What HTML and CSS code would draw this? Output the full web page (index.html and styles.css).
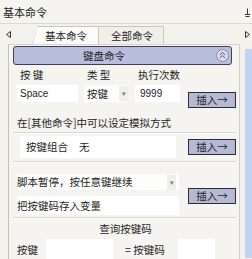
FILE: index.html
```html
<!doctype html>
<html lang="zh">
  <head>
    <meta charset="UTF-8" />
    <title>基本命令</title>
    <link rel="stylesheet" href="styles.css">
  </head>
  <body>
    <div class="titlebar">
      <span class="title">基本命令</span>
      <svg class="pin" width="7" height="9" viewBox="0 0 7 9">
        <path d="M3.5 0.5v6M1 6.5h5M1.5 8.5h4" stroke="#333" stroke-width="1" fill="none" />
      </svg>
    </div>
    <div class="tabbar">
      <svg class="arrow" width="5" height="7" viewBox="0 0 5 7">
        <path d="M4.5 0.5v6L0.5 3.5z" fill="none" stroke="#333" stroke-width="1" />
      </svg>
      <div class="tabs">
        <div class="tab active">基本命令</div>
        <div class="tab">全部命令</div>
      </div>
      <svg class="arrow" width="5" height="7" viewBox="0 0 5 7">
        <path d="M0.5 0.5v6L4.5 3.5z" fill="none" stroke="#333" stroke-width="1" />
      </svg>
    </div>
    <div class="main">
      <div class="panel">
        <div class="header">
          <span class="header-title">键盘命令</span>
          <svg class="collapse" width="13" height="13" viewBox="0 0 13 13">
            <circle cx="6.5" cy="6.5" r="6" fill="#d8dbec" stroke="#8a8ca4" />
            <path d="M3.8 6l2.7-2.5L9.2 6M3.8 9l2.7-2.5L9.2 9" fill="none" stroke="#55576e" stroke-width="1" />
          </svg>
        </div>

        <div class="sec sec-keys">
          <div class="fields">
            <div class="labels">
              <span class="col-key">按 键</span>
              <span class="col-type">类 型</span>
              <span>执行次数</span>
            </div>
            <div class="inputs">
              <div class="input latin key">Space</div>
              <div class="select type">按键<span class="drop">▾</span></div>
              <div class="input latin count">9999</div>
            </div>
          </div>
          <button class="insert ins-1">插入→</button>
        </div>
        <div class="hint">在[其他命令]中可以设定模拟方式</div>
        <div class="sep"></div>

        <div class="sec sec-combo">
          <div class="input combo"><span class="combo-label">按键组合</span>无</div>
          <button class="insert">插入→</button>
        </div>
        <div class="sep"></div>

        <div class="sec sec-pause">
          <div class="pause-fields">
            <div class="select pause">脚本暂停，按任意键继续<span class="drop">▾</span></div>
            <div class="input store">把按键码存入变量</div>
          </div>
          <button class="insert ins-3">插入→</button>
        </div>
        <div class="sep"></div>

        <div class="query-title">查询按键码</div>
        <div class="query">
          <span>按键</span>
          <div class="input q-key"></div>
          <span class="eq">= 按键码</span>
          <div class="input q-code"></div>
        </div>
      </div>
      <div class="side">
        <div class="side-blue"></div>
      </div>
    </div>
  </body>
</html>
```

FILE: styles.css
```css
html,
body {
  margin: 0;
}
body {
  width: 252px;
  height: 259px;
  overflow: hidden;
  background: #f2f1ec;
  color: #1e1e1e;
  font-family: "Noto Sans CJK SC", sans-serif;
  font-size: 10.5px;
  line-height: 14px;
}

.titlebar {
  height: 23px;
  display: flex;
  align-items: center;
  justify-content: space-between;
  padding: 0 1px 0 3px;
  border-bottom: 1px solid #dcdad0;
  background: #f5f4f0;
}
.title {
  font-size: 11px;
}
.pin {
  margin-top: 2px;
}

.tabbar {
  height: 20px;
  display: flex;
  align-items: center;
  padding: 0 2px 0 6px;
}
.tabs {
  flex: 1;
  display: flex;
  align-self: flex-end;
  margin-left: 21px;
  height: 18px;
}
.tab {
  width: 52px;
  height: 17px;
  padding-left: 12px;
  border: 1px solid #c9c7bd;
  border-bottom: none;
  line-height: 17px;
  background: #f0efea;
}
.tab.active {
  width: 53px;
  padding-left: 13px;
  background: #fbfbf9;
  border-left: none;
  clip-path: polygon(6px 0, 100% 0, 100% 100%, 0 100%);
  position: relative;
  z-index: 1;
}
.tab.active::before {
  content: '';
  position: absolute;
  left: 2px;
  top: -1px;
  width: 1px;
  height: 20px;
  background: #c9c7bd;
  transform: rotate(17deg);
}
.tab + .tab {
  margin-left: -1px;
}

.main {
  display: flex;
}
.panel {
  width: 223px;
  height: 213px;
  padding: 1px 3px 0 4px;
  border-top: 1px solid #d9d7cd;
  border-left: 1px solid #c4c2b7;
  border-right: 1px solid #d2d0c6;
  margin-left: 8px;
  background: #f5f4f1;
}
.side {
  width: 12px;
  padding-top: 5px;
  display: flex;
  justify-content: flex-end;
}
.side-blue {
  width: 7px;
  height: 209px;
  background: #c6d2f1;
}

.header {
  height: 17px;
  margin-right: 4px;
  border: 1px solid #3e3f52;
  border-radius: 3px;
  background: #b9bedc;
  display: flex;
  align-items: center;
  padding: 0 2px 0 0;
}
.header-title {
  flex: 1;
  text-align: center;
  padding-right: 22px;
}

.sec {
  display: flex;
  justify-content: space-between;
  padding-left: 4px;
}
.insert {
  width: 48px;
  height: 16px;
  padding: 0;
  border: 1px solid #2c2c36;
  background: #b6b9d5;
  font: inherit;
  line-height: 14px;
  color: #1e1e1e;
}

.labels {
  display: flex;
  margin-top: 3px;
  height: 14px;
  padding-left: 3px;
}
.col-key {
  width: 67px;
}
.col-type {
  width: 51px;
}
.inputs {
  display: flex;
  margin-top: 3px;
  height: 17px;
}
.input {
  background: #ffffff;
  height: 17px;
  line-height: 17px;
}
.latin {
  font-family: "Liberation Sans", sans-serif;
  font-size: 10px;
}
.key {
  width: 58px;
  padding-left: 3px;
}
.select {
  display: flex;
  justify-content: space-between;
  align-items: center;
  background: #fdfdfc;
}
.drop {
  width: 9px;
  height: 15px;
  line-height: 15px;
  text-align: center;
  font-size: 7px;
  color: #777;
  background: #eeeeea;
}
.type {
  width: 41px;
  margin-left: 6px;
  padding-left: 3px;
}
.count {
  width: 40px;
  margin-left: 7px;
  padding-left: 5px;
}
.ins-1 {
  margin-top: 27px;
}

.hint {
  margin-top: 8px;
  padding-left: 4px;
}
.sep {
  height: 1px;
  margin: 2px 0 0 0;
  background: #d8d6cc;
  border-bottom: 1px solid #ffffff;
}

.sec-combo {
  align-items: center;
  padding-top: 2px;
  padding-left: 7px;
}
.combo {
  width: 150px;
  height: 22px;
  line-height: 22px;
  padding-left: 6px;
}
.combo-label {
  margin-right: 11px;
}
.sec-combo + .sep {
  margin-top: 3px;
}

.sec-pause {
  padding-top: 11px;
}
.pause-fields {
  width: 162px;
}
.pause {
  height: 16px;
  padding-right: 3px;
}
.store {
  margin-top: 6px;
  height: 19px;
  line-height: 19px;
}
.ins-3 {
  margin-top: 14px;
}

.query-title {
  margin-top: 3px;
  text-align: center;
  padding-left: 2px;
}
.query {
  display: flex;
  align-items: center;
  padding-left: 4px;
  margin-top: 3px;
}
.q-key {
  width: 67px;
  height: 22px;
  margin-left: 8px;
}
.eq {
  margin-left: 12px;
}
.q-code {
  width: 37px;
  height: 22px;
  margin-left: 13px;
}
```
